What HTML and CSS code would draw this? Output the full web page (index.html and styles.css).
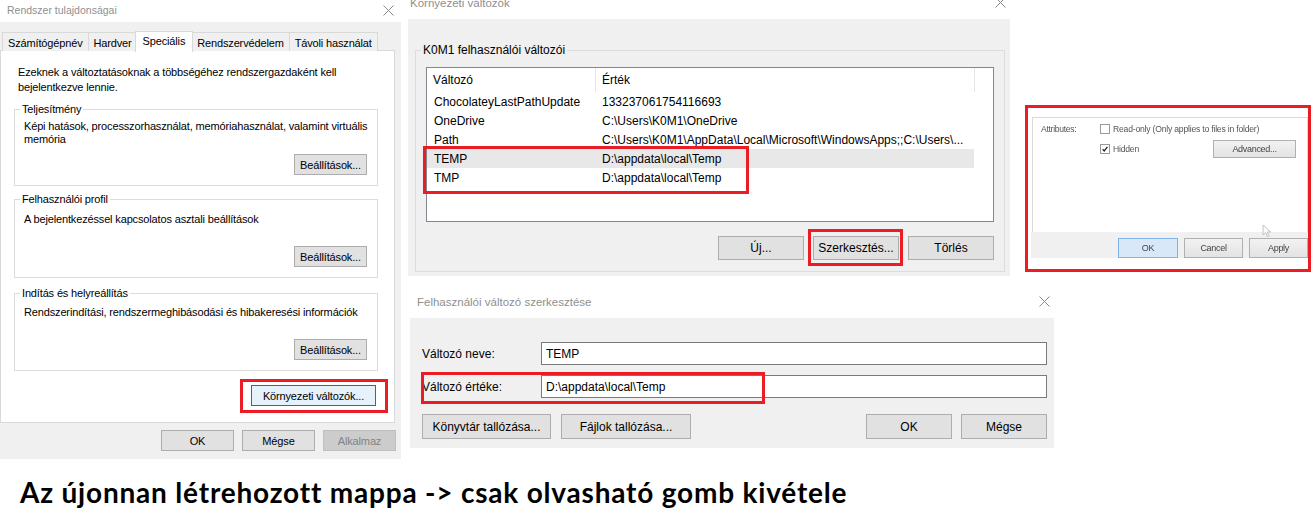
FILE: index.html
```html
<!DOCTYPE html>
<html lang="hu">
<head>
<meta charset="utf-8">
<title>Környezeti változók</title>
<link rel="stylesheet" href="styles.css">
</head>
<body>
<div class="desk">

  <section class="win w-sys">
    <header class="titlebar">
      <span class="title">Rendszer tulajdonságai</span>
      <svg class="close" viewBox="0 0 11 11"><path d="M0.5 0.5L10.5 10.5M10.5 0.5L0.5 10.5"/></svg>
    </header>
    <div class="wbody sys-body">
      <nav class="tabs">
        <span class="tab">Számítógépnév</span>
        <span class="tab">Hardver</span>
        <span class="tab active">Speciális</span>
        <span class="tab">Rendszervédelem</span>
        <span class="tab">Távoli használat</span>
      </nav>
      <div class="panel">
        <p class="intro">Ezeknek a változtatásoknak a többségéhez rendszergazdaként kell<br>bejelentkezve lennie.</p>
        <div class="group g1">
          <span class="legend">Teljesítmény</span>
          <p class="gtext">Képi hatások, processzorhasználat, memóriahasználat, valamint virtuális<br>memória</p>
          <button class="btn btn-set">Beállítások...</button>
        </div>
        <div class="group g2">
          <span class="legend">Felhasználói profil</span>
          <p class="gtext">A bejelentkezéssel kapcsolatos asztali beállítások</p>
          <button class="btn btn-set">Beállítások...</button>
        </div>
        <div class="group g3">
          <span class="legend">Indítás és helyreállítás</span>
          <p class="gtext">Rendszerindítási, rendszermeghibásodási és hibakeresési információk</p>
          <button class="btn btn-set">Beállítások...</button>
        </div>
        <div class="env-row">
          <button class="btn btn-env">Környezeti változók...</button>
        </div>
      </div>
      <div class="foot">
        <button class="btn btn-foot">OK</button>
        <button class="btn btn-foot">Mégse</button>
        <button class="btn btn-foot disabled">Alkalmaz</button>
      </div>
    </div>
    <div class="redbox rb-env"></div>
  </section>

  <section class="win w-env">
    <header class="titlebar">
      <span class="title">Környezeti változók</span>
      <svg class="close" viewBox="0 0 11 11"><path d="M0.5 0.5L10.5 10.5M10.5 0.5L0.5 10.5"/></svg>
    </header>
    <div class="wbody env-body">
      <div class="group grp-env">
        <span class="legend">K0M1 felhasználói változói</span>
        <div class="list">
          <div class="lhead">
            <span class="h1">Változó</span>
            <span class="h2">Érték</span>
          </div>
          <div class="lrow"><span class="c1">ChocolateyLastPathUpdate</span><span class="c2">133237061754116693</span></div>
          <div class="lrow"><span class="c1">OneDrive</span><span class="c2">C:\Users\K0M1\OneDrive</span></div>
          <div class="lrow"><span class="c1">Path</span><span class="c2">C:\Users\K0M1\AppData\Local\Microsoft\WindowsApps;;C:\Users\...</span></div>
          <div class="lrow sel"><span class="c1">TEMP</span><span class="c2">D:\appdata\local\Temp</span></div>
          <div class="lrow"><span class="c1">TMP</span><span class="c2">D:\appdata\local\Temp</span></div>
        </div>
        <div class="btnrow">
          <button class="btn btn-env2">Új...</button>
          <button class="btn btn-env2">Szerkesztés...</button>
          <button class="btn btn-env2">Törlés</button>
        </div>
      </div>
    </div>
    <div class="redbox rb-temp"></div>
    <div class="redbox rb-edit"></div>
  </section>

  <section class="win w-edit">
    <header class="titlebar">
      <span class="title">Felhasználói változó szerkesztése</span>
      <svg class="close" viewBox="0 0 11 11"><path d="M0.5 0.5L10.5 10.5M10.5 0.5L0.5 10.5"/></svg>
    </header>
    <div class="wbody edit-body">
      <div class="frow">
        <span class="flabel">Változó neve:</span>
        <span class="finput">TEMP</span>
      </div>
      <div class="frow frow2">
        <span class="flabel">Változó értéke:</span>
        <span class="finput">D:\appdata\local\Temp</span>
      </div>
      <div class="ebtns">
        <button class="btn btn-browse">Könyvtár tallózása...</button>
        <button class="btn btn-browse">Fájlok tallózása...</button>
        <span class="spacer"></span>
        <button class="btn btn-env2">OK</button>
        <button class="btn btn-env2">Mégse</button>
      </div>
    </div>
    <div class="redbox rb-value"></div>
  </section>

  <section class="shot">
    <div class="pframe">
      <div class="pcontent">
        <div class="attrs">
          <span class="alabel">Attributes:</span>
          <span class="aopt"><span class="cb"></span>Read-only (Only applies to files in folder)</span>
          <span></span>
          <span class="aopt arow2"><span class="cb"><svg viewBox="0 0 10 10"><path d="M2 5.2L4 7.4L8 2.4"/></svg></span>Hidden<button class="obtn adv">Advanced...</button></span>
        </div>
      </div>
      <div class="pfoot">
        <button class="obtn ok">OK</button>
        <button class="obtn">Cancel</button>
        <button class="obtn">Apply</button>
      </div>
    </div>
    <svg class="pointer" viewBox="0 0 10 14"><path d="M1 1L1 11L3.6 8.6L5.4 12.6L7 11.8L5.3 8L8.8 8Z"/></svg>
  </section>

  <p class="caption">Az újonnan létrehozott mappa -&gt; csak olvasható gomb kivétele</p>

</div>
</body>
</html>
```

FILE: styles.css
```css
* { box-sizing: border-box; }
html, body { margin: 0; padding: 0; }
body {
  width: 1311px;
  height: 517px;
  background: #fff;
  color: #000;
  font-family: "Liberation Sans", Arial, sans-serif;
  overflow: hidden;
}
p { margin: 0; }
button { font: inherit; color: inherit; letter-spacing: inherit; margin: 0; padding: 0; cursor: default; }

.desk { position: relative; width: 1311px; height: 517px; }

.win { position: absolute; display: flex; flex-direction: column; }

.titlebar {
  flex: none;
  display: flex;
  align-items: center;
  justify-content: space-between;
  background: #fff;
}
.title { color: #8f8f8f; font-family: "Liberation Sans", Arial, sans-serif; font-size: 11.5px; letter-spacing: 0; white-space: nowrap; }
.close { width: 11px; height: 11px; fill: none; stroke: #8a8a8a; stroke-width: 1; flex: none; }

.wbody { flex: 1; background: #f0f0f0; display: flex; flex-direction: column; }

.btn {
  background: #e1e1e1;
  border: 1px solid #adadad;
  display: flex;
  align-items: center;
  justify-content: center;
  white-space: nowrap;
}

.redbox { position: absolute; border: 3px solid #ec1c24; pointer-events: none; }

/* ---------- Rendszer tulajdonságai ---------- */
.w-sys { left: 0; top: 0; width: 401px; height: 459px; font-size: 11px; letter-spacing: -0.15px; }
.w-sys .titlebar { height: 22px; padding: 0 7px 2px 7px; }
.w-sys .title { font-size: 10.5px; }
.sys-body { padding-top: 9px; }

.tabs { display: flex; align-items: flex-end; height: 20px; margin-left: 2px; position: relative; z-index: 1; }
.tab {
  height: 19px;
  padding: 0 5px;
  border: 1px solid #d9d9d9;
  border-bottom: none;
  margin-right: -1px;
  background: #f0f0f0;
  display: flex;
  align-items: center;
  padding-top: 1px;
  white-space: nowrap;
}
.tab.active {
  height: 21px;
  background: #fff;
  margin: 0 -2px -1px -2px;
  padding: 0 7px 3px 7px;
  position: relative;
  z-index: 2;
}

.panel {
  background: #fff;
  border: 1px solid #d9d9d9;
  height: 373px;
  margin-right: 6px;
  margin-top: -1px;
  padding: 0 16px 0 13px;
  display: flex;
  flex-direction: column;
}
.intro { margin-top: 14px; padding-left: 4px; line-height: 15px; white-space: nowrap; }

.group {
  position: relative;
  border: 1px solid #dcdcdc;
  display: flex;
  flex-direction: column;
  padding: 10px 10px 10px 9px;
  flex: none;
}
.legend {
  position: absolute;
  top: -7px;
  left: 5px;
  padding: 0 2px;
  line-height: 13px;
  background: #fff;
  white-space: nowrap;
}
.gtext { line-height: 13px; white-space: nowrap; }
.btn-set { width: 73px; height: 21px; align-self: flex-end; margin-top: auto; }

.g1 { margin-top: 14px; height: 77px; padding-top: 10px; }
.g2 { margin-top: 13px; height: 79px; padding-top: 13px; }
.g3 { margin-top: 15px; height: 78px; padding-top: 12px; }

.env-row { display: flex; justify-content: flex-end; margin-top: 14px; padding-right: 2px; }
.btn-env { width: 125px; height: 21px; background: #e5f1fb; border-color: #0078d7; }

.foot { display: flex; justify-content: flex-end; gap: 8px; margin-top: 7px; padding-right: 5px; }
.btn-foot { width: 73px; height: 21px; }
.btn-foot.disabled { background: #cccccc; border-color: #bfbfbf; color: #838383; }

.rb-env { left: 240px; top: 379px; width: 148px; height: 34px; }

/* ---------- Környezeti változók ---------- */
.w-env {
  left: 408px;
  top: -12px;
  width: 602px;
  height: 288px;
  font-family: "Liberation Sans Narrow", "Liberation Sans", Arial, sans-serif;
  font-size: 12px;
}
.w-env .titlebar { height: 31px; padding: 0 4px 2px 2px; }
.env-body { padding: 31px 5px 4px 7px; }
.grp-env { height: 222px; padding: 16px 10px 11px 10px; }
.grp-env .legend { background: #f0f0f0; top: -8px; line-height: 15px; }

.list { height: 155px; border: 1px solid #828790; background: #fff; flex: none; }
.lhead { display: flex; height: 24px; }
.lhead span { display: flex; align-items: center; height: 24px; border-right: 1px solid #e5e5e5; }
.lhead .h1 { width: 169px; padding-left: 6px; }
.lhead .h2 { width: 379px; padding-left: 6px; }
.lrow { display: flex; align-items: center; width: 547px; height: 19px; white-space: nowrap; }
.lrow .c1 { width: 175px; padding-left: 7px; flex: none; }
.lrow.sel { background: #e8e8e8; }

.btnrow { display: flex; justify-content: flex-end; gap: 9px; margin-top: 14px; }
.btn-env2 { width: 86px; height: 24px; }

.rb-temp { left: 15px; top: 158px; width: 326px; height: 48px; }
.rb-edit { left: 400px; top: 241px; width: 95px; height: 37px; }

/* ---------- Felhasználói változó szerkesztése ---------- */
.w-edit {
  left: 410px;
  top: 287px;
  width: 644px;
  height: 161px;
  font-family: "Liberation Sans Narrow", "Liberation Sans", Arial, sans-serif;
  font-size: 12px;
}
.w-edit .titlebar { height: 31px; padding: 0 4px 2px 7px; }
.edit-body { padding: 24px 7px 9px 12px; }
.frow { display: flex; align-items: center; height: 23px; }
.frow2 { margin-top: 10px; }
.flabel { width: 119px; flex: none; }
.finput {
  flex: 1;
  height: 23px;
  border: 1px solid #7a7a7a;
  background: #fff;
  padding-left: 4px;
  display: flex;
  align-items: center;
}
.ebtns { display: flex; align-items: center; gap: 10px; margin-top: 16px; }
.ebtns .btn-env2 { height: 25px; }
.ebtns .btn-env2:last-child { margin-left: -1px; }
.btn-browse { width: 129px; height: 25px; }
.btn-browse + .btn-browse { width: 130px; }
.spacer { flex: 1; }

.rb-value { left: 11px; top: 85px; width: 344px; height: 32px; }

/* ---------- Régi tulajdonság-kép ---------- */
.shot {
  position: absolute;
  left: 1025px;
  top: 105px;
  width: 286px;
  height: 167px;
  border: 3px solid #ec1c24;
  background: #fff;
  padding: 9px 0 0 4px;
  font-family: "Liberation Sans", Arial, sans-serif;
  font-size: 8.6px;
  color: #555;
}
.pframe { display: flex; flex-direction: column; width: 276px; filter: blur(0.35px); }
.pcontent {
  height: 115px;
  border: 1px solid #dadada;
  border-bottom: none;
  padding: 5px 0 0 8px;
}
.attrs { display: grid; grid-template-columns: 59px 1fr; row-gap: 5px; align-items: center; }
.alabel { letter-spacing: -0.3px; }
.aopt { display: flex; align-items: center; gap: 3px; height: 12px; letter-spacing: -0.2px; white-space: nowrap; }
.aopt.arow2 { height: 18px; }
.cb { width: 10px; height: 10px; border: 1px solid #9a9a9a; background: #fff; display: flex; flex: none; }
.cb svg { width: 8px; height: 8px; fill: none; stroke: #222; stroke-width: 1.6; }
.obtn {
  height: 18px;
  border: 1px solid #b0b0b0;
  background: linear-gradient(#f2f2f2, #e3e3e3);
  color: #444;
  display: flex;
  align-items: center;
  justify-content: center;
  font-size: 9px;
  letter-spacing: -0.3px;
}
.adv { width: 83px; margin-left: auto; margin-right: 11px; }
.pfoot {
  height: 26px;
  background: #f0f0f0;
  display: flex;
  justify-content: flex-end;
  gap: 6px;
  padding-top: 6px;
  margin-left: -1px;
  margin-right: 0;
}
.pfoot .obtn { width: 59px; height: 20px; }
.pfoot .ok { width: 60px; background: #d9e8f8; border-color: #7eb4ea; }

.pointer {
  position: absolute;
  left: 234px;
  top: 116px;
  width: 10px;
  height: 14px;
  fill: #fbfbfb;
  stroke: #b5b5b5;
  stroke-width: 0.8;
  filter: blur(0.4px);
}

/* ---------- Felirat ---------- */
.caption {
  position: absolute;
  left: 20px;
  top: 475px;
  font-family: Lato, "Liberation Sans", sans-serif;
  font-weight: 700;
  font-size: 28px;
  letter-spacing: 0.8px;
  line-height: 34px;
  color: #000;
  white-space: nowrap;
}
```
